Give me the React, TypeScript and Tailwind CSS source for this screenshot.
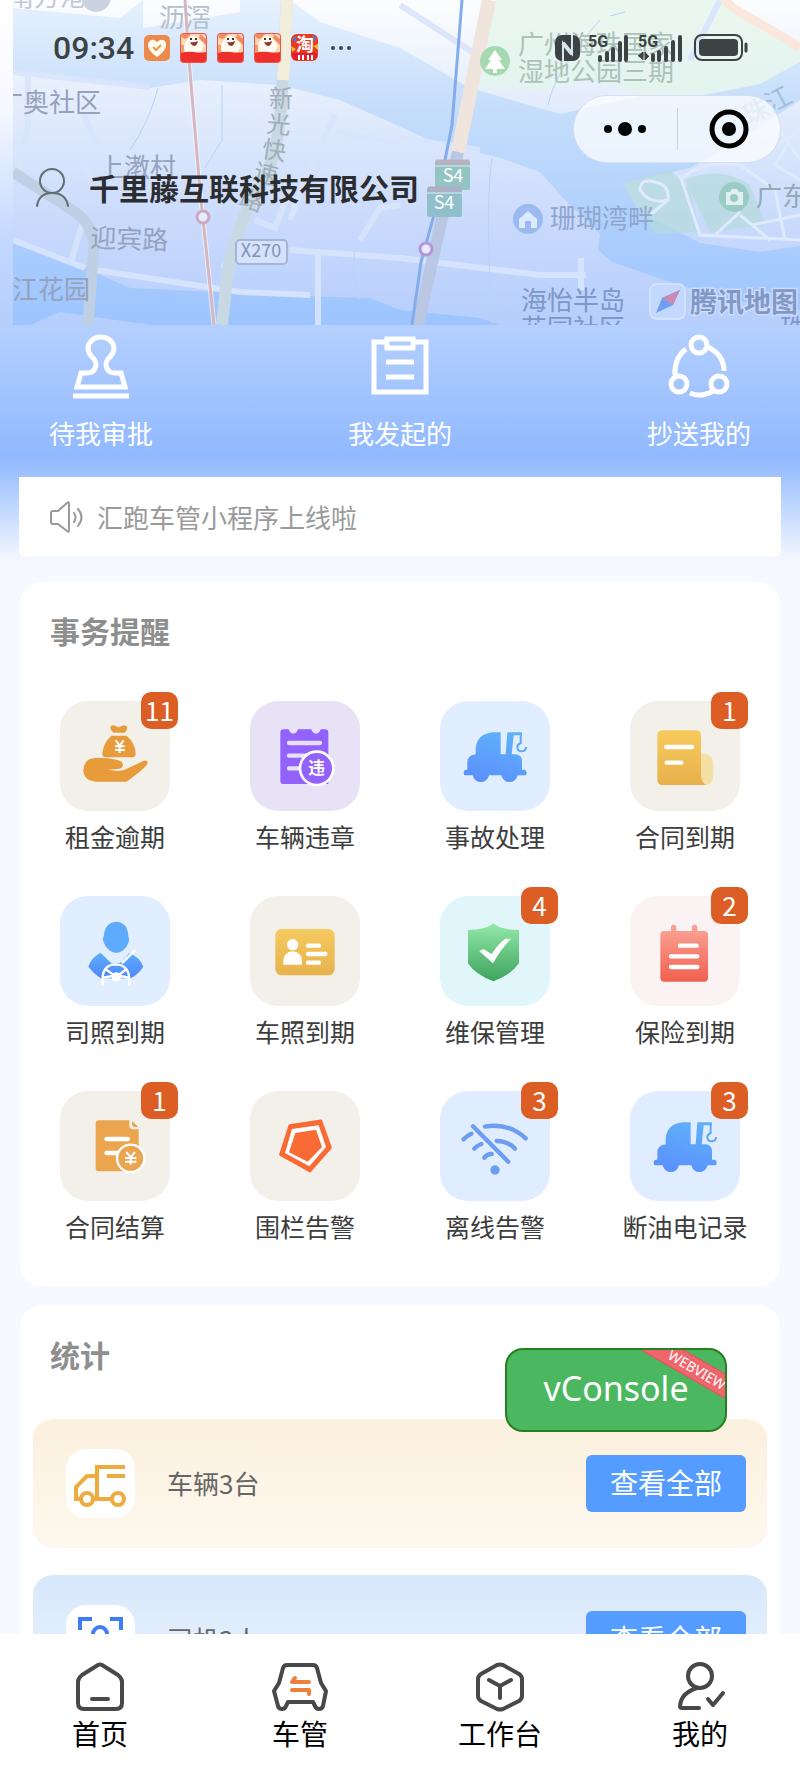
import type { ReactNode } from "react";

type Reminder = { label: string; tile: string; icon: ReactNode; count?: number };

function Lines({ d, color = "#fff", width = 13 }: { d: string; color?: string; width?: number }) {
  return <path d={d} stroke={color} strokeWidth={width} strokeLinecap="round" fill="none" />;
}

function Gradient({ id, from, to }: { id: string; from: string; to: string }) {
  return (
    <linearGradient id={id} x1="0" y1="0" x2="0" y2="1">
      <stop offset="0" stopColor={from} />
      <stop offset="1" stopColor={to} />
    </linearGradient>
  );
}

/* Reminder icons, all on a 330 x 330 grid */

const rentIcon = (
  <>
    <path d="M152 76Q160 69 168 76Q176 81 184 76Q194 69 202 78Q203 86 194 95H160Q149 86 152 76Z" fill="#e79b3a" />
    <path d="M154 104H200Q226 126 227 158Q227 169 215 169H138Q126 169 127 156Q130 126 154 104Z" fill="#e79b3a" />
    <path d="M167 118L179 134L191 118M179 134V156M165 136H194M165 147H194" stroke="#fff" strokeWidth="6" fill="none" />
    <path
      d="M70 208Q72 170 112 170Q145 170 172 177Q192 182 188 196Q184 205 170 204L145 206L172 210Q190 211 205 201L250 180Q266 175 262 189Q255 202 200 242H108Q72 240 70 208Z"
      fill="#e79b3a"
    />
  </>
);

const violationIcon = (
  <>
    <path d="M101 85H116Q120 98 130 98Q140 98 144 85H184Q188 98 198 98Q208 98 212 85H225Q235 85 235 95V249H101Q91 249 91 239V95Q91 85 101 85Z" fill="#9361fb" />
    <Lines d="M117 126H210M117 164H170M117 202H150" color="#e8e0f8" />
    <circle cx="200" cy="202" r="50" fill="#9361fb" stroke="#fff" strokeWidth="8" />
    <text x="200" y="220" textAnchor="middle" fontSize="50" fontWeight="700" fill="#fff">违</text>
  </>
);

function TowTruck({ id }: { id: string }) {
  return (
    <>
      <defs>
        <linearGradient id={id} gradientUnits="userSpaceOnUse" x1="180" y1="90" x2="130" y2="250">
          <stop offset="0" stopColor="#5fb0fb" />
          <stop offset="1" stopColor="#5b8ffc" />
        </linearGradient>
      </defs>
      <path
        d="M107 170V142Q112 97 160 94H182V160H197L202 94H246V103H221L215 160H228Q246 162 246 182V206H254Q260 208 260 215Q260 223 254 223H233A25 25 0 0 1 184 223H147A25 25 0 0 1 98 223H77Q71 223 71 215Q71 208 77 206H82V182Q84 162 107 160Z"
        fill={`url(#${id})`}
      />
      <path d="M242 100V126Q232 130 232 139Q234 152 246 151Q258 150 258 138" stroke="#5fa8fb" strokeWidth="6" fill="none" />
    </>
  );
}

const contractIcon = (
  <>
    <defs><Gradient id="contract" from="#f7cb5d" to="#e7b04c" /></defs>
    <path d="M213 158H228Q250 164 250 190V222Q248 252 228 252H213Z" fill="#f4e0a5" />
    <path d="M98 88H198Q213 88 213 104V222Q214 246 230 252H98Q82 252 82 236V104Q82 88 98 88Z" fill="url(#contract)" />
    <Lines d="M109 138H186M110 185H154" />
  </>
);

const driverIcon = (
  <>
    <defs><Gradient id="driver" from="#5eaefb" to="#4e86fb" /></defs>
    <path d="M169 77Q204 79 205 122Q210 129 204 143Q195 166 169 171Q142 166 133 143Q125 129 131 122Q134 79 169 77Z" fill="#5eaafc" />
    <path d="M122 170L154 202Q172 204 184 199L208 171Q240 184 250 212Q238 232 212 247H122Q100 232 85 212Q94 184 122 170Z" fill="url(#driver)" />
    <path d="M128 265Q122 206 167 205Q212 206 208 265M128 245L158 240M180 240L208 245M140 222L160 236M196 222L178 236M188 200L224 164" stroke="#fff" strokeWidth="7" fill="none" strokeLinecap="round" />
    <circle cx="169" cy="243" r="14" fill="#fff" />
  </>
);

const licenceIcon = (
  <>
    <defs><Gradient id="licence" from="#f5ca60" to="#e7b24c" /></defs>
    <rect x="76" y="99" width="178" height="139" rx="19" fill="url(#licence)" />
    <circle cx="128" cy="146" r="17" fill="#fff" />
    <path d="M100 206V194Q102 168 128 166Q154 168 156 194V206Z" fill="#fff" />
    <Lines d="M174 149H207M174 174H226M174 200H207" />
  </>
);

const shieldIcon = (
  <>
    <defs><Gradient id="shield" from="#94e9a9" to="#3ca35c" /></defs>
    <path d="M160 82Q180 102 237 102V202Q214 236 160 256Q106 236 84 202V102Q140 102 160 82Z" fill="url(#shield)" />
    <path d="M118 166L130 159L155 174Q175 142 196 128H213Q182 160 159 202Z" fill="#fff" />
  </>
);

const insuranceIcon = (
  <>
    <defs><Gradient id="insurance" from="#fa9e90" to="#f0604f" /></defs>
    <Lines d="M131 94V115M194 94V115" color="#faa092" width={16} />
    <rect x="91" y="105" width="143" height="152" rx="12" fill="url(#insurance)" />
    <Lines d="M150 149H200M123 181H202M123 213H202" />
  </>
);

const settlementIcon = (
  <>
    <path d="M117 88H208V104Q209 115 222 115H236V232Q236 241 226 241H117Q107 241 107 231V98Q107 88 117 88Z" fill="#eba54f" />
    <path d="M216 90L235 108H222Q216 107 216 100Z" fill="#eba54f" />
    <Lines d="M140 144H203M140 186H175" width={14} />
    <circle cx="212" cy="202" r="41" fill="#eba54f" stroke="#fff" strokeWidth="7" />
    <path d="M199 183L212 199L225 183M212 199V221M195 201H229M195 212H229" stroke="#fff" strokeWidth="6" fill="none" />
  </>
);

const fenceIcon = (
  <g strokeLinejoin="round">
    <path d="M119 103L213 89L242 170L180 241L91 191Z" fill="#fa6a34" stroke="#fa6a34" strokeWidth="7" />
    <path d="M126 114L206 103L228 168L178 226L105 186Z" fill="#fff" />
    <path d="M136 126L198 116L216 168L173 212L117 184Z" fill="#fa6a34" />
  </g>
);

const offlineIcon = (
  <>
    <Lines d="M99 106L205 212M135 107Q204 94 257 142M170 150Q205 151 225 173M71 145Q82 133 94 128M103 173Q112 162 124 159M133 200Q142 188 155 189" color="#6c9df0" />
    <circle cx="165" cy="237" r="14" fill="#6c9df0" />
  </>
);

const REMINDERS: Reminder[] = [
  { label: "租金逾期", tile: "bg-[#f3f0e9]", icon: rentIcon, count: 11 },
  { label: "车辆违章", tile: "bg-[#e8e2f6]", icon: violationIcon },
  { label: "事故处理", tile: "bg-[#e0eeff]", icon: <TowTruck id="tow-accident" /> },
  { label: "合同到期", tile: "bg-[#f3f0e9]", icon: contractIcon, count: 1 },
  { label: "司照到期", tile: "bg-[#e0eeff]", icon: driverIcon },
  { label: "车照到期", tile: "bg-[#f3f0e9]", icon: licenceIcon },
  { label: "维保管理", tile: "bg-[#e0f6fb]", icon: shieldIcon, count: 4 },
  { label: "保险到期", tile: "bg-[#faf2f3]", icon: insuranceIcon, count: 2 },
  { label: "合同结算", tile: "bg-[#f3f0e9]", icon: settlementIcon, count: 1 },
  { label: "围栏告警", tile: "bg-[#f3f0e9]", icon: fenceIcon },
  { label: "离线告警", tile: "bg-[#e0ecff]", icon: offlineIcon, count: 3 },
  { label: "断油电记录", tile: "bg-[#e0ecff]", icon: <TowTruck id="tow-fuel" />, count: 3 },
];

const APPROVALS = [
  {
    label: "待我审批",
    icon: (
      <>
        <path d="M12 39H18Q26 39 27 31Q27 26 23 23Q17 16 20 10Q24 3 32 3Q40 3 44 10Q47 16 41 23Q37 26 37 31Q38 39 46 39H52L56 53H8Z" />
        <path d="M4 62H60" />
      </>
    ),
  },
  {
    label: "我发起的",
    icon: (
      <>
        <path d="M18 8H6V58H58V8H46" />
        <path d="M19 5H45V14H19ZM18 28H46M18 43H46" />
      </>
    ),
  },
  {
    label: "抄送我的",
    icon: (
      <>
        <circle cx="32" cy="11" r="8" />
        <circle cx="12" cy="50" r="8" />
        <circle cx="52" cy="50" r="8" />
        <path d="M8 41Q7 24 19 15M41 13Q57 21 57 37M46 57Q34 64 23 59" />
      </>
    ),
  },
];

const STATS = [
  {
    label: "车辆3台",
    row: "bg-linear-to-b from-[#fcf0de] to-[#fdf8ee]",
    icon: (
      <g stroke="#eeab3e">
        <path d="M59 18H31V50M59 27H41M31 27H21L10 38V50H15M27 50H46" />
        <circle cx="21" cy="50" r="6" />
        <circle cx="52" cy="50" r="6" />
      </g>
    ),
  },
  {
    label: "司机3人",
    row: "bg-linear-to-b from-[#d7e8fb] to-[#edf4ff]",
    icon: (
      <g stroke="#3f7df6">
        <path d="M14 25V14H26M44 14H55V25M14 44V55H26M44 55H55V44" />
        <circle cx="34" cy="29" r="7" />
        <path d="M23 47Q25 38 34 38Q43 38 45 47" />
      </g>
    ),
  },
];

const TABS = [
  {
    label: "首页",
    icon: <path d="M23 2Q25 1 27 2L43 12Q47 15 47 19V40Q47 46 41 46H9Q3 46 3 40V19Q3 15 7 12ZM17 36H33" />,
  },
  {
    label: "车管",
    icon: (
      <>
        <path d="M12 2H38Q41 2 42 5L46 20L51 28L48 43Q47 46 44 46Q41 46 40 43L38 39H13L11 43Q10 46 7 46Q4 46 3 43L-1 28L4 20L8 5Q9 2 12 2Z" />
        <path d="M34 19H17L20 15M17 27H34V31" stroke="#f07e3c" />
      </>
    ),
  },
  {
    label: "工作台",
    icon: <path d="M22 2Q25 1 28 2L44 11Q47 13 47 16V33Q47 36 44 38L28 46Q25 47 22 46L6 38Q3 36 3 33V16Q3 13 6 11ZM14 17L25 23L36 17M25 23V35" />,
  },
  {
    label: "我的",
    icon: (
      <>
        <circle cx="25" cy="13" r="12" />
        <path d="M22 25Q6 30 5 43Q5 45 7 45H24M33 36L38 42L48 30" />
      </>
    ),
  },
];

function MapBackdrop() {
  return (
    <svg
      className="absolute top-0 right-0 h-[325px] w-[calc(100%-13px)]"
      viewBox="13 0 787 325"
      preserveAspectRatio="xMidYMid slice"
      aria-hidden="true"
    >
      <defs>
        <linearGradient id="land" gradientUnits="userSpaceOnUse" x1="0" y1="0" x2="0" y2="325">
          <stop offset="0" stopColor="#fcfdfe" />
          <stop offset="0.35" stopColor="#e1ebfc" />
          <stop offset="0.7" stopColor="#c8d9fc" />
          <stop offset="1" stopColor="#b6cefd" />
        </linearGradient>
        <linearGradient id="water" gradientUnits="userSpaceOnUse" x1="0" y1="0" x2="0" y2="325">
          <stop offset="0" stopColor="#e6f1fd" />
          <stop offset="0.3" stopColor="#c8dffb" />
          <stop offset="0.75" stopColor="#aacdfd" />
          <stop offset="1" stopColor="#9cc4fe" />
        </linearGradient>
      </defs>
      <rect x="13" width="787" height="325" fill="url(#land)" />
      <path d="M495 0H720L800 45V70L740 90L700 94H640L590 80L545 90L480 88Z" fill="#e2f5e8" opacity="0.7" />
      <path
        d="M13 8L120 18L143 0V28L240 12V0H290L320 22L400 48L470 88L560 114L640 96L700 96L760 84L800 62V100L740 140L690 168L622 183L640 212L700 243L760 252L800 246V310L730 300L670 282L612 262L598 250L600 234L565 200L540 172L500 158L430 140L340 100L280 85L200 80L150 88L60 75L13 70Z"
        fill="url(#water)"
      />
      <path d="M13 243L85 268L130 288L300 296L370 298L400 310L480 318L500 325H150L60 312L30 325H13Z" fill="url(#water)" />
      <path d="M622 183L670 170L690 190L700 232L655 234L640 212ZM685 180Q720 165 750 185L765 225L710 232Z" fill="#b4dadb" opacity="0.7" />

      {/* Side streets */}
      <g fill="none" stroke="#d9e5fd" strokeWidth="6" opacity="0.9">
        <path d="M28 75V130L18 172M13 72L150 87M84 115L102 158L160 172M80 155L92 180M70 265L85 215M95 270L240 292L310 295" />
        <path d="M290 250L400 258L540 275L586 275M581 258V290M335 115L305 180L290 220M335 132L400 145M318 255V325M360 240L380 208L400 205M255 220L275 228L290 190" />
        <path d="M13 240L85 268M240 250L222 268M720 0L690 60M400 5L500 70M400 138L480 150" />
      </g>
      <g fill="none" stroke="#dfeafd" strokeWidth="3">
        <path d="M640 190Q640 178 655 182Q670 185 668 200Q650 205 640 190ZM668 200L650 215M680 175L700 235L800 240M680 180Q700 160 740 165L775 190L785 240M740 215L770 240M790 140L775 165L800 180" />
        <path d="M780 130L800 160M770 150L800 130M715 235L740 212M752 225L800 215" />
      </g>
      <g fill="none" stroke="#b7d3f7" strokeWidth="1">
        <path d="M158 88Q150 120 130 150M222 85V140L205 168M492 158Q485 200 492 325M548 105Q555 70 600 20M355 250Q350 275 360 300M610 16L625 12" />
      </g>

      {/* Main roads */}
      <g fill="none">
        <path d="M13 172L75 212Q92 224 94 245L88 325" stroke="#bfd0e4" strokeWidth="11" />
        <path d="M287 0L282 90Q280 160 255 195Q238 225 228 270L222 325" stroke="#c9d9e3" strokeWidth="12" />
        <path d="M287 0L283 80" stroke="#f3eedc" strokeWidth="12" />
        <path d="M489 0L458 152" stroke="#f0e5dc" strokeWidth="14" />
        <path d="M458 152L437 240L418 325" stroke="#b9c7e2" strokeWidth="12" />
        <path d="M722 -4Q730 8 745 15L800 47" stroke="#fbe8dc" strokeWidth="9" />
        <path d="M185 0L189 60L200 190L214 325" stroke="#fff" strokeWidth="5" opacity="0.6" />
        <path d="M185 0L189 60L200 190L214 325" stroke="#d6b6bf" strokeWidth="3" />
        <path d="M462 0L452 125L445 160L434 215L421 262L412 325" stroke="#84acec" strokeWidth="3" />
        <circle cx="203" cy="217" r="6" fill="#e5eafd" stroke="#cba9c0" strokeWidth="3" />
        <circle cx="426" cy="249" r="6" fill="#e5eafd" stroke="#b396da" strokeWidth="3" />
      </g>

      {/* Place names */}
      <g fontSize="26" fill="#94a2bd">
        <text x="8" y="6" fill="#c3c9d2">南方港</text>
        <circle cx="96" cy="-3" r="15" fill="#cad3e0" />
        <text x="159" y="27" fill="#b4bfcc">沥滘</text>
        <text x="-3" y="112">广奥社区</text>
        <text x="98" y="177">上漖村</text>
        <text x="90" y="247" transform="rotate(2 90 247)">迎宾路</text>
        <text x="12" y="299">江花园</text>
        <g fill="#a1adb9" fontSize="24">
          <text x="269" y="107">新</text>
          <text x="266" y="132" transform="rotate(5 266 132)">光</text>
          <text x="261" y="157" transform="rotate(9 261 157)">快</text>
          <text x="252" y="179" transform="rotate(15 252 179)">速</text>
          <text x="238" y="204" transform="rotate(20 238 204)">路</text>
        </g>
        <g fill="#adc1ba">
          <text x="518" y="54">广州海珠国家</text>
          <text x="518" y="81">湿地公园三期</text>
        </g>
        <text x="550" y="228" fill="#8fa6cf">珊瑚湾畔</text>
        <text x="756" y="206" fill="#8fabb8">广东</text>
        <text x="748" y="126" fill="#a3bedb" transform="rotate(-28 748 126)">珠江</text>
        <text x="521" y="310" fill="#7d97c8">海怡半岛</text>
        <text x="521" y="338" fill="#7d97c8">花园社区</text>
        <text x="780" y="338" fill="#7d97c8">珠</text>
      </g>

      {/* Markers and road shields */}
      <circle cx="495" cy="61" r="15" fill="#a5dab0" />
      <path d="M495 50L502 60H499L505 69H497V73H493V69H485L491 60H488Z" fill="#fff" />
      <circle cx="528" cy="219" r="15" fill="#9bbaf0" />
      <path d="M519 219L528 211L537 219V228H531V221H525V228H519Z" fill="#dde9fd" />
      <circle cx="734" cy="197" r="15" fill="#9acbc4" />
      <path d="M726 192H730L732 189H737L739 192H743V205H726Z" fill="#e0f0f0" />
      <circle cx="734" cy="198" r="4" fill="#9acbc4" />
      <rect x="236" y="240" width="51" height="24" rx="4" fill="#d5e1fd" stroke="#a5b5d5" strokeWidth="2" />
      <text x="261" y="257" fontSize="18" fill="#8394b4" textAnchor="middle">X270</text>
      <g textAnchor="middle" fontSize="18" fill="#fff">
        <rect x="435" y="160" width="35" height="30" rx="2" fill="#93c4c3" />
        <path d="M436 162H469" stroke="#b9b0c0" strokeWidth="5" />
        <path d="M435 166H470" stroke="#dfeaf4" strokeWidth="1" />
        <text x="453" y="182">S4</text>
        <rect x="427" y="187" width="35" height="30" rx="2" fill="#8fbfcb" />
        <path d="M428 189H461" stroke="#b0aec5" strokeWidth="5" />
        <path d="M427 193H462" stroke="#dfeaf4" strokeWidth="1" />
        <text x="444" y="209">S4</text>
      </g>
      <rect x="650" y="284" width="35" height="35" rx="7" fill="#c3d8fe" stroke="#d3e2fe" strokeWidth="2" />
      <path d="M680 290L662 298L656 313L673 305Z" fill="#6f9ff2" />
      <path d="M680 290L662 298L673 305Z" fill="#c98bb0" />
      <text x="690" y="312" fontSize="27" fontWeight="700" fill="#8299c6" stroke="#cbdcfd" strokeWidth="3" paintOrder="stroke">
        腾讯地图
      </text>
    </svg>
  );
}

function MascotIcon() {
  return (
    <svg className="h-[30px] w-[27px]" viewBox="0 0 27 30" aria-hidden="true">
      <rect width="27" height="30" rx="4" fill="#ef5348" />
      <path d="M1 4Q1 1 4 1H23Q26 1 26 4V20H1Z" fill="#fbd9b4" />
      <path d="M1 3Q5 9 9 3L11 1H4Q1 1 1 3ZM20 1L26 6V12L19 5Z" fill="#f38a62" />
      <path d="M1 12Q5 11 6 15L3 20H1Z" fill="#f3a06c" />
      <path d="M8 6Q9 3 13 3Q18 3 19 7Q25 10 23 15L20 20H5L4 15Q4 9 8 6Z" fill="#fffaf2" />
      <path d="M10 6H12M15 6H17" stroke="#443333" strokeWidth="2" />
      <path d="M10 9Q14 10 18 8Q17 13 14 13Q11 12 10 9Z" fill="#8c3a31" />
      <path d="M1 20Q7 18 14 19T26 19V26Q26 29 23 29H4Q1 29 1 26Z" fill="#ee2f2c" />
    </svg>
  );
}

function Signal({ roaming }: { roaming?: boolean }) {
  return (
    <svg className="h-7 w-11" viewBox="0 0 44 28" aria-hidden="true">
      <text className="font-['Roboto',sans-serif]" x="0" y="13" fontSize="16" fontWeight="700" fill="#3c4344">5G</text>
      <path
        d={roaming ? "M15 26V21M21 26V18M28 26V14M35 26V8M42 26V3" : "M12 26V23M19 26V19M25 26V15M32 26V9M38 26V3"}
        stroke="#3c4344"
        strokeWidth="4"
        strokeLinecap="round"
      />
      {roaming && <path d="M0 22L5 18V26M7 18V26L11 22" stroke="#3c4344" strokeWidth="1" fill="#3c4344" />}
    </svg>
  );
}

function StatusBar() {
  return (
    <div className="flex h-[95px] items-center justify-between pr-[52px] pl-[53px] text-[#3c4344]">
      <div className="flex items-center gap-[10px]">
        <span className="font-['Roboto',sans-serif] text-[32px] leading-none font-medium">09:34</span>
        <svg className="h-[26px] w-[26px]" viewBox="0 0 26 26" aria-hidden="true">
          <rect width="26" height="26" rx="5" fill="#ed8a4b" />
          <path d="M13 22Q3 15 4 9Q6 4 10 5L13 7L16 5Q21 4 22 9Q23 15 13 22Z" fill="#fffbef" />
          <path d="M9 12L12 15L17 10" stroke="#ed9a4b" strokeWidth="2" fill="none" />
        </svg>
        <MascotIcon />
        <MascotIcon />
        <MascotIcon />
        <svg className="h-[27px] w-[27px]" viewBox="0 0 27 27" aria-hidden="true">
          <rect width="27" height="27" rx="6" fill="#e63b22" />
          <path d="M1 5L5 2V8ZM20 1L25 3V8Z" fill="#4f7bd0" />
          <path d="M0 12L5 15L1 18ZM22 12L27 10V16Z" fill="#f2b43c" />
          <text x="14" y="17" textAnchor="middle" fontSize="18" fontWeight="700" fill="#fff">淘</text>
          <path d="M1 19H26V21Q26 26 21 26H6Q1 26 1 21Z" fill="#e0202b" />
          <path d="M8 21V26M12 21V26M17 21V26M21 21V26" stroke="#fff" strokeWidth="2" />
        </svg>
        <svg className="ml-[2px] h-2 w-[22px]" viewBox="0 0 22 8" fill="currentColor" aria-hidden="true">
          <circle cx="3" cy="4" r="2" />
          <circle cx="11" cy="4" r="2" />
          <circle cx="19" cy="4" r="2" />
        </svg>
      </div>
      <div className="flex items-center gap-[6px]">
        <svg className="mr-[2px] h-[26px] w-[25px]" viewBox="0 0 25 26" fill="none" aria-hidden="true">
          <rect width="25" height="26" rx="7" fill="#3c4344" />
          <path d="M8 26V8L17 19V0" stroke="#d9e6ee" strokeWidth="2" />
          <path d="M8 8L17 19" stroke="#d9e6ee" strokeWidth="4" />
        </svg>
        <Signal />
        <Signal roaming />
        <svg className="ml-[6px] h-[27px] w-[54px]" viewBox="0 0 54 27" fill="none" aria-hidden="true">
          <rect x="1" y="1" width="47" height="25" rx="7" stroke="#3c4344" strokeWidth="2" />
          <rect x="5" y="5" width="39" height="17" rx="4" fill="#3c4344" />
          <path d="M52 10V17" stroke="#3c4344" strokeWidth="3" strokeLinecap="round" />
        </svg>
      </div>
    </div>
  );
}

function MiniProgramCapsule() {
  return (
    <div className="mr-[19px] flex h-[68px] w-[208px] items-center self-end rounded-full border border-[#d5dfee] bg-white/70">
      <button className="flex flex-1 justify-center" aria-label="更多">
        <svg className="h-4 w-[42px]" viewBox="0 0 42 16" aria-hidden="true">
          <circle cx="4" cy="8" r="4" />
          <circle cx="21" cy="8" r="7" />
          <circle cx="38" cy="8" r="4" />
        </svg>
      </button>
      <span className="h-[42px] w-px bg-[#cbd3e0]" />
      <button className="flex flex-1 justify-center" aria-label="关闭">
        <svg className="h-10 w-10" viewBox="0 0 40 40" aria-hidden="true">
          <circle cx="20" cy="20" r="17" fill="none" stroke="#000" strokeWidth="5" />
          <circle cx="20" cy="20" r="7" />
        </svg>
      </button>
    </div>
  );
}

function Header() {
  return (
    <header className="relative h-[325px]">
      <MapBackdrop />
      <div className="relative flex flex-col">
        <StatusBar />
        <MiniProgramCapsule />
        <div className="mt-[2px] flex items-center gap-[19px] px-[35px]">
          <svg className="h-10 w-[35px] shrink-0" viewBox="0 0 35 40" fill="none" stroke="#666c75" strokeWidth="2" strokeLinecap="round" aria-hidden="true">
            <circle cx="17" cy="14" r="12" />
            <path d="M2 39Q4 26 17 26Q31 26 33 39" />
          </svg>
          <h1 className="text-[30px] leading-[44px] font-bold text-[#2b2d30]">千里藤互联科技有限公司</h1>
        </div>
      </div>
    </header>
  );
}

function Approvals() {
  return (
    <div className="flex justify-between px-[49px] pt-[9px]">
      {APPROVALS.map((item) => (
        <button key={item.label} className="flex flex-col items-center text-[26px] leading-9 text-white">
          <svg className="mb-[13px] h-[68px] w-16" viewBox="0 0 64 68" fill="none" stroke="currentColor" strokeWidth="5" aria-hidden="true">
            {item.icon}
          </svg>
          {item.label}
        </button>
      ))}
    </div>
  );
}

function Notice() {
  return (
    <div className="mx-[19px] mt-[26px] flex h-20 items-center gap-[13px] rounded-b-md bg-white px-[30px] text-[26px] text-[#9a9a9a]">
      <svg className="h-9 w-[35px]" viewBox="0 0 35 36" fill="none" stroke="currentColor" strokeWidth="2" strokeLinecap="round" strokeLinejoin="round" aria-hidden="true">
        <path d="M4 12H9L18 4Q20 2 20 5V31Q20 34 18 32L9 25H4Q2 25 2 23V14Q2 12 4 12ZM25 14Q28 18 25 23M29 10Q36 18 29 27" />
      </svg>
      <p className="pb-[2px]">汇跑车管小程序上线啦</p>
    </div>
  );
}

function Reminders() {
  return (
    <section className="mx-5 mt-[25px] rounded-[22px] bg-white pt-7 pb-[42px]">
      <h2 className="px-[30px] text-[30px] leading-10 font-bold text-[#8e8e8e]">事务提醒</h2>
      <div className="mt-[51px] grid grid-cols-4 gap-y-[42px]">
        {REMINDERS.map((item) => (
          <button key={item.label} className="flex flex-col items-center gap-[7px]">
            <span className={"relative size-[110px] rounded-[28px] " + item.tile}>
              <svg className="size-full" viewBox="0 0 330 330" aria-hidden="true">{item.icon}</svg>
              {item.count && (
                <span className="absolute -top-[9px] -right-2 flex size-[37px] items-center justify-center rounded-[10px] bg-[#dc5e25] pb-[2px] text-[26px] leading-none text-white">
                  {item.count}
                </span>
              )}
            </span>
            <span className="text-[25px] leading-9 whitespace-nowrap text-[#3d3d3d]">{item.label}</span>
          </button>
        ))}
      </div>
    </section>
  );
}

function Stats() {
  return (
    <section className="relative mx-5 mt-[19px] rounded-[22px] bg-white px-[13px] pt-[29px] pb-8">
      <h2 className="px-[17px] text-[30px] leading-10 font-bold text-[#8e8e8e]">统计</h2>
      <div className="mt-[45px] flex flex-col gap-[27px]">
        {STATS.map((item) => (
          <div key={item.label} className={"flex h-[129px] items-center rounded-[20px] pr-[21px] pl-[33px] " + item.row}>
            <span className="size-[69px] rounded-[20px] bg-white">
              <svg className="size-full" viewBox="0 0 69 69" fill="none" strokeWidth="4" aria-hidden="true">{item.icon}</svg>
            </span>
            <span className="ml-8 flex-1 pb-[2px] text-[26px] text-[#666]">{item.label}</span>
            <button className="h-[57px] w-40 rounded-md bg-[#549cff] pb-[3px] text-[28px] text-white">查看全部</button>
          </div>
        ))}
      </div>
      <button className="absolute top-[43px] right-[53px] h-[84px] w-[222px] overflow-hidden rounded-[18px] border-2 border-[#27801f] bg-[#4bb760] pb-1 font-['Noto_Sans',sans-serif] text-[34px] leading-none text-white">
        vConsole
        <span className="absolute top-[9px] -right-[42px] flex h-[22px] w-[140px] rotate-30 items-center justify-center border-y border-[#d9555b] bg-[#ef656c] text-[14px]">
          WEBVIEW
        </span>
      </button>
    </section>
  );
}

function TabBar() {
  return (
    <nav className="z-10 grid h-[142px] shrink-0 grid-cols-4 bg-white pt-[29px]">
      {TABS.map((tab) => (
        <a key={tab.label} href="#" className="flex flex-col items-center gap-[2px] text-[28px] leading-10 text-black">
          <svg className="h-12 w-[50px] overflow-visible" viewBox="0 0 50 48" fill="none" stroke="#484848" strokeWidth="4" strokeLinecap="round" strokeLinejoin="round" aria-hidden="true">
            {tab.icon}
          </svg>
          {tab.label}
        </a>
      ))}
    </nav>
  );
}

export default function App() {
  return (
    <div className="flex h-screen flex-col overflow-hidden bg-[#f6f9ff] font-['Noto_Sans_CJK_SC',sans-serif]">
      <main className="relative min-h-0 flex-1 overflow-hidden">
        <div className="absolute inset-x-0 top-0 h-[570px] bg-[linear-gradient(#fff_0px,#f5f8ff_110px,#c3d8ff_240px,#b3cffe_330px,#91b9ff_455px,#a0c3ff_475px,#f6f9ff_562px)]" />
        <div className="relative">
          <Header />
          <Approvals />
          <Notice />
          <Reminders />
          <Stats />
        </div>
      </main>
      <TabBar />
    </div>
  );
}
